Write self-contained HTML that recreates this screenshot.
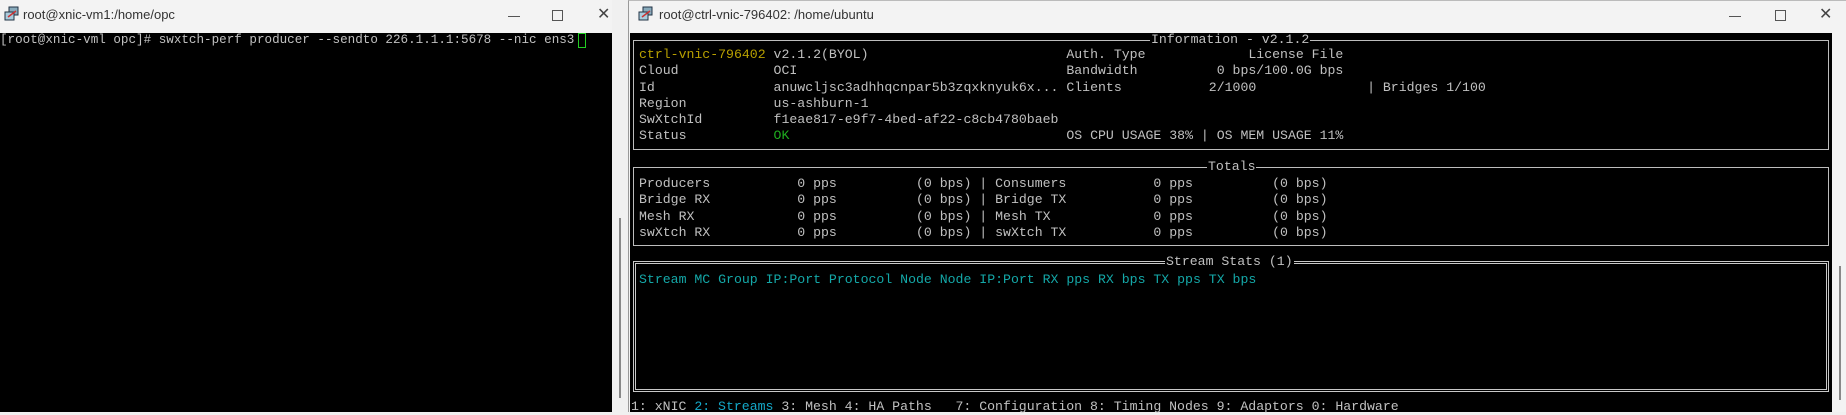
<!DOCTYPE html>
<html><head><meta charset="utf-8"><style>
*{margin:0;padding:0;box-sizing:border-box}
body{width:1846px;height:412px;overflow:hidden;background:#f0f0f0;position:relative;font-family:"Liberation Mono",monospace}
.abs{position:absolute}
.tb{font-family:"Liberation Sans",sans-serif;font-size:13px;color:#333}
.t{position:absolute;white-space:pre;font-size:13.2px;line-height:16.3px;color:#c0c0c0}
.box{position:absolute;border:1px solid #bdbdbd}
.dbl{position:absolute;border:3px double #c8c8c8}
.ttl{position:absolute;background:#000;color:#c0c0c0;font-size:13.2px;white-space:pre;line-height:14px;padding:0 1px}
.ctl{position:absolute;color:#444;font-family:"Liberation Sans",sans-serif;font-size:16px}
</style></head><body>
<!-- left window -->
<div class="abs" style="left:0;top:0;width:612px;height:33px;background:#f3f3f3"></div>
<svg class="abs" style="left:4px;top:6px" width="16" height="16" viewBox="0 0 16 16"><rect x="5" y="1" width="9" height="8" fill="#8ab" stroke="#234" /><rect x="1" y="6" width="9" height="8" fill="#acd" stroke="#234"/><path d="M4 11 L12 5" stroke="#c33" stroke-width="1.5"/></svg>
<div class="abs tb" style="left:23px;top:7px">root@xnic-vm1:/home/opc</div>
<div class="abs" style="left:508px;top:16px;width:12px;height:1px;background:#555"></div>
<div class="abs" style="left:552px;top:10px;width:11px;height:11px;border:1px solid #555"></div>
<div class="ctl" style="left:597px;top:4px">✕</div>
<div class="abs" style="left:0;top:33px;width:612px;height:379px;background:#000"></div>
<div class="abs" style="left:0;top:32px;white-space:pre;font-size:12.6px;line-height:16px;color:#c0c0c0">[root@xnic-vml opc]# swxtch-perf producer --sendto 226.1.1.1:5678 --nic ens3</div>
<div class="abs" style="left:578px;top:33px;width:8px;height:15px;border:1px solid #2c2"></div>
<div class="abs" style="left:619px;top:218px;width:2px;height:180px;background:#888"></div>
<!-- right window -->
<div class="abs" style="left:628px;top:0;width:1218px;height:412px;background:#f3f3f3;border-left:1px solid #999;border-top:1px solid #bbb"></div>
<svg class="abs" style="left:638px;top:6px" width="16" height="16" viewBox="0 0 16 16"><rect x="5" y="1" width="9" height="8" fill="#8ab" stroke="#234" /><rect x="1" y="6" width="9" height="8" fill="#acd" stroke="#234"/><path d="M4 11 L12 5" stroke="#c33" stroke-width="1.5"/></svg>
<div class="abs tb" style="left:659px;top:7px">root@ctrl-vnic-796402: /home/ubuntu</div>
<div class="abs" style="left:1729px;top:16px;width:12px;height:1px;background:#555"></div>
<div class="abs" style="left:1775px;top:10px;width:11px;height:11px;border:1px solid #555"></div>
<div class="ctl" style="left:1819px;top:4px">✕</div>
<div class="abs" style="left:630px;top:33px;width:1202px;height:379px;background:#000"></div>
<div class="abs" style="left:1839px;top:266px;width:2px;height:134px;background:#888"></div>

<div class="box" style="left:633px;top:40px;width:1196px;height:110px"></div>
<div class="ttl" style="left:1150px;top:33px">Information - v2.1.2</div>
<div class="t" style="left:639px;top:47px"><span style="color:#b8a000">ctrl-vnic-796402</span> v2.1.2(BYOL)                         Auth. Type             License File
Cloud            OCI                                  Bandwidth          0 bps/100.0G bps
Id               anuwcljsc3adhhqcnpar5b3zqxknyuk6x... Clients           2/1000              | Bridges 1/100
Region           us-ashburn-1
SwXtchId         f1eae817-e9f7-4bed-af22-c8cb4780baeb
Status           <span style="color:#1fae1f">OK</span>                                   OS CPU USAGE 38% | OS MEM USAGE 11%</div>

<div class="box" style="left:633px;top:167px;width:1196px;height:79px"></div>
<div class="ttl" style="left:1207px;top:160px">Totals</div>
<div class="t" style="left:639px;top:176px">Producers           0 pps          (0 bps) | Consumers           0 pps          (0 bps)
Bridge RX           0 pps          (0 bps) | Bridge TX           0 pps          (0 bps)
Mesh RX             0 pps          (0 bps) | Mesh TX             0 pps          (0 bps)
swXtch RX           0 pps          (0 bps) | swXtch TX           0 pps          (0 bps)</div>

<div class="dbl" style="left:633px;top:261px;width:1196px;height:131px"></div>
<div class="ttl" style="left:1165px;top:255px">Stream Stats (1)</div>
<div class="t" style="left:639px;top:272px;color:#14a8a8">Stream MC Group IP:Port Protocol Node Node IP:Port RX pps RX bps TX pps TX bps</div>
<div class="t" style="left:631px;top:399px">1: xNIC <span style="color:#14a8c8">2: Streams</span> 3: Mesh 4: HA Paths   7: Configuration 8: Timing Nodes 9: Adaptors 0: Hardware</div>
</body></html>
